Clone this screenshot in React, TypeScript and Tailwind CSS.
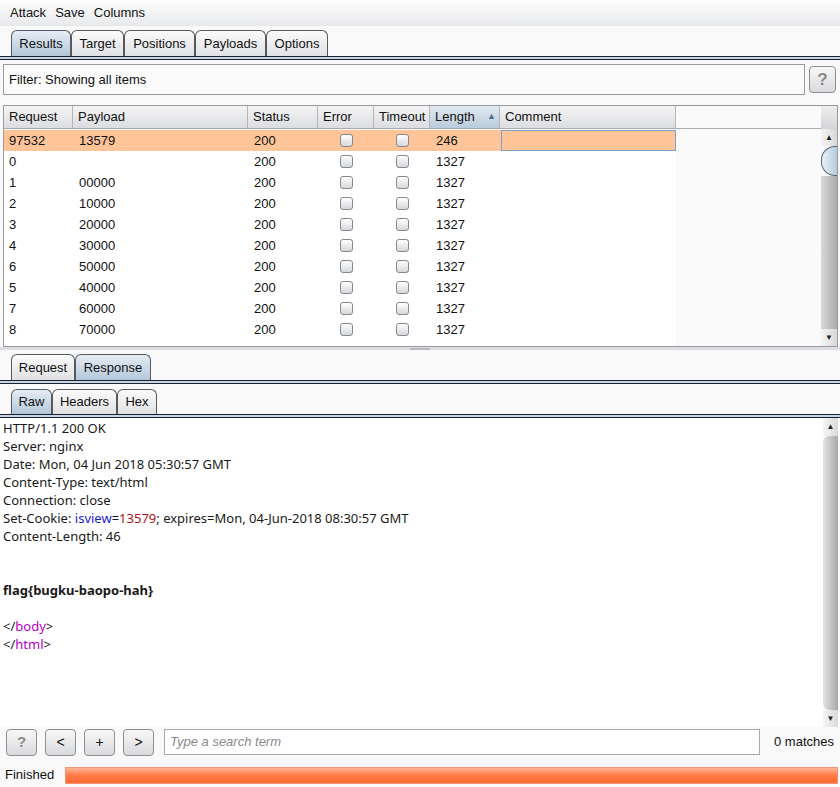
import React from "react";

// Burp Intruder results window: tabs, result table, response viewer, search bar, progress.

type Row = { req: string; payload: string; status: string; length: string; sel?: boolean };

const rows: Row[] = [
  { req: "97532", payload: "13579", status: "200", length: "246", sel: true },
  { req: "0", payload: "", status: "200", length: "1327" },
  { req: "1", payload: "00000", status: "200", length: "1327" },
  { req: "2", payload: "10000", status: "200", length: "1327" },
  { req: "3", payload: "20000", status: "200", length: "1327" },
  { req: "4", payload: "30000", status: "200", length: "1327" },
  { req: "6", payload: "50000", status: "200", length: "1327" },
  { req: "5", payload: "40000", status: "200", length: "1327" },
  { req: "7", payload: "60000", status: "200", length: "1327" },
  { req: "8", payload: "70000", status: "200", length: "1327" },
];

function Tab({ label, w, active }: { label: string; w: string; active?: boolean }) {
  return (
    <div
      className={`${w} h-full flex items-center justify-center border border-b-0 border-[#55585c] rounded-t-[6px] ${
        active ? "bg-linear-to-b from-[#e6edf4] to-[#b3c7da]" : "bg-linear-to-b from-[#fbfbfb] to-[#e0e1e4]"
      }`}
    >
      {label}
    </div>
  );
}

function TabLine() {
  return (
    <div className="shrink-0">
      <div className="h-px bg-[#1c2333]" />
      <div className="h-[2px] bg-[#c6d5e4]" />
      <div className="h-px bg-[#1c2333]" />
    </div>
  );
}

function Check() {
  return (
    <span className="block w-[13px] h-[13px] rounded-[3px] border border-[#85888c] bg-linear-to-b from-white to-[#d6d8db]" />
  );
}

function HeadCell({ label, w, sorted }: { label: string; w: string; sorted?: boolean }) {
  return (
    <div
      className={`${w} h-full flex items-center pl-[5px] border-r border-[#b4b6ba] ${
        sorted ? "bg-linear-to-b from-[#e2eaf2] to-[#b9cbdc] justify-between pr-[3px]" : ""
      }`}
    >
      <span>{label}</span>
      {sorted && <span className="text-[9px] text-[#4a6f95]">▲</span>}
    </div>
  );
}

function Btn({ children, dim }: { children: React.ReactNode; dim?: boolean }) {
  return (
    <div
      className={`w-[31px] h-[27px] flex items-center justify-center rounded-[4px] border border-[#8c8e92] bg-linear-to-b from-[#f8f8f8] to-[#d9dadd] ${
        dim ? "text-[#8a8a8a] font-bold text-[15px]" : "text-[#111] text-[14px]"
      }`}
    >
      {children}
    </div>
  );
}

export default function App() {
  return (
    <div
      className="w-[840px] h-[787px] bg-[#f9f9f9] flex flex-col text-[13px] text-[#111] overflow-hidden"
      style={{ fontFamily: '"Liberation Sans", Arial, sans-serif' }}
    >
      {/* menu */}
      <div className="h-[26px] shrink-0 flex items-center gap-[9px] pl-[10px] bg-linear-to-b from-[#fdfdfd] to-[#e8e9eb]">
        <span>Attack</span>
        <span>Save</span>
        <span>Columns</span>
      </div>

      {/* main tabs */}
      <div className="mt-[4px] h-[26px] shrink-0 flex pl-[11px]">
        <Tab label="Results" w="w-[60px]" active />
        <Tab label="Target" w="w-[53px]" />
        <Tab label="Positions" w="w-[71px]" />
        <Tab label="Payloads" w="w-[71px]" />
        <Tab label="Options" w="w-[62px]" />
      </div>
      <TabLine />

      {/* filter */}
      <div className="mt-[4px] h-[31px] shrink-0 flex items-center pl-[3px] pr-[4px] gap-[4px]">
        <div className="flex-1 h-full flex items-center pl-[5px] bg-[#fbfbfb] border border-[#9a9b9e]">
          Filter: Showing all items
        </div>
        <div className="w-[27px] h-[27px] flex items-center justify-center rounded-[4px] border border-[#8c8e92] bg-linear-to-b from-[#f8f8f8] to-[#d9dadd] text-[#8a8a8a] font-bold text-[17px]">
          ?
        </div>
      </div>

      {/* results table */}
      <div className="mt-[10px] mx-[3px] mr-[2px] h-[242px] shrink-0 border border-[#9a9b9e] flex bg-[#fafafa]">
        <div className="flex-1 flex flex-col">
          <div className="h-[23px] shrink-0 flex border-b border-[#a9abaf]">
            <div className="w-[672px] h-full flex bg-linear-to-b from-[#f5f5f6] to-[#dcdde1]">
              <HeadCell label="Request" w="w-[69px]" />
              <HeadCell label="Payload" w="w-[175px]" />
              <HeadCell label="Status" w="w-[70px]" />
              <HeadCell label="Error" w="w-[56px]" />
              <HeadCell label="Timeout" w="w-[56px]" />
              <HeadCell label="Length" w="w-[70px]" sorted />
              <HeadCell label="Comment" w="w-[176px]" />
            </div>
          </div>
          <div className="flex-1 flex flex-col pt-px">
            {rows.map((r) => (
              <div
                key={r.req}
                className={`w-[672px] h-[21px] shrink-0 flex items-center ${r.sel ? "bg-[#ffc599]" : "bg-white"}`}
              >
                <div className="w-[69px] pl-[5px]">{r.req}</div>
                <div className="w-[175px] pl-[6px]">{r.payload}</div>
                <div className="w-[70px] pl-[6px]">{r.status}</div>
                <div className="w-[56px] flex justify-center">
                  <Check />
                </div>
                <div className="w-[56px] flex justify-center">
                  <Check />
                </div>
                <div className="w-[70px] pl-[6px]">{r.length}</div>
                <div className="w-[176px] h-full pl-px">
                  {r.sel && <div className="h-full border border-[#7ba1cd]" />}
                </div>
              </div>
            ))}
            <div className="flex-1 w-[672px] bg-white" />
          </div>
        </div>
        {/* table scrollbar */}
        <div className="w-[16px] flex flex-col">
          <div className="h-[23px] shrink-0 bg-linear-to-b from-[#eeeeef] to-[#d4d5d8]" />
          <div className="h-[17px] shrink-0 flex items-center justify-center text-[8px] text-[#222] bg-linear-to-r from-[#f4f4f4] to-[#d8d8d8]">
            ▲
          </div>
          <div className="h-[30px] shrink-0 rounded-l-[14px] border border-r-0 border-[#55677c] bg-linear-to-r from-[#e9f0f7] to-[#b7cbde]" />
          <div className="flex-1 bg-linear-to-r from-[#d8d8da] to-[#a9aaad]" />
          <div className="h-[17px] shrink-0 flex items-center justify-center text-[8px] text-[#222] bg-linear-to-r from-[#f4f4f4] to-[#d8d8d8]">
            ▼
          </div>
        </div>
      </div>

      {/* split divider */}
      <div className="h-[5px] shrink-0 flex flex-col">
        <div className="h-[3px] bg-[#dcdde0] flex justify-center">
          <div className="w-[20px] h-[2px] mt-px bg-[#b8b9bc]" />
        </div>
      </div>

      {/* request / response tabs */}
      <div className="mt-[2px] h-[26px] shrink-0 flex pl-[11px]">
        <Tab label="Request" w="w-[64px]" />
        <Tab label="Response" w="w-[76px]" active />
      </div>
      <TabLine />

      {/* raw / headers / hex tabs */}
      <div className="mt-[5px] h-[25px] shrink-0 flex pl-[11px]">
        <Tab label="Raw" w="w-[41px]" active />
        <Tab label="Headers" w="w-[65px]" />
        <Tab label="Hex" w="w-[40px]" />
      </div>
      <TabLine />

      {/* response body */}
      <div className="h-[309px] shrink-0 flex bg-white">
        <div
          className="flex-1 pl-[3px] pt-px text-[13px] leading-[18px] text-[#1a1a1a]"
          style={{ fontFamily: '"Noto Sans", "Open Sans", sans-serif' }}
        >
          <div>HTTP/1.1 200 OK</div>
          <div>Server: nginx</div>
          <div>Date: Mon, 04 Jun 2018 05:30:57 GMT</div>
          <div>Content-Type: text/html</div>
          <div>Connection: close</div>
          <div>
            Set-Cookie: <span className="text-[#1a1ad0]">isview</span>=<span className="text-[#b01414]">13579</span>;
            expires=Mon, 04-Jun-2018 08:30:57 GMT
          </div>
          <div>Content-Length: 46</div>
          <div className="h-[18px]" />
          <div className="h-[18px]" />
          <div className="font-bold">flag{"{"}bugku-baopo-hah{"}"}</div>
          <div className="h-[18px]" />
          <div>
            &lt;/<span className="text-[#b400c8]">body</span>&gt;
          </div>
          <div>
            &lt;/<span className="text-[#b400c8]">html</span>&gt;
          </div>
        </div>
        <div className="w-[15px] mr-[2px] flex flex-col">
          <div className="h-[18px] shrink-0 flex items-center justify-center text-[8px] text-[#222] bg-linear-to-r from-[#f6f6f6] to-[#dadada]">
            ▲
          </div>
          <div className="flex-1 rounded-l-[6px] bg-linear-to-r from-[#e4e4e6] to-[#a7a8ab]" />
          <div className="h-[17px] shrink-0 flex items-center justify-center text-[8px] text-[#222] bg-linear-to-r from-[#f6f6f6] to-[#dadada]">
            ▼
          </div>
        </div>
      </div>

      {/* search bar */}
      <div className="mt-px h-[28px] shrink-0 flex items-center pl-[6px] pr-[6px]">
        <div className="flex gap-[8px]">
          <Btn dim>?</Btn>
          <Btn>&lt;</Btn>
          <Btn>+</Btn>
          <Btn>&gt;</Btn>
        </div>
        <div className="ml-[10px] w-[596px] h-[26px] flex items-center pl-[5px] bg-white border border-[#a8a9ac] italic text-[#8a8a8a]">
          Type a search term
        </div>
        <div className="ml-auto">0 matches</div>
      </div>

      {/* status */}
      <div className="mt-[10px] h-[18px] shrink-0 flex items-center pl-[5px] pr-[2px] gap-[11px]">
        <span>Finished</span>
        <div className="flex-1 h-[17px] border border-[#f09478] bg-linear-to-b from-[#ffb395] via-[#ff7a45] to-[#ff6830]" />
      </div>
    </div>
  );
}
